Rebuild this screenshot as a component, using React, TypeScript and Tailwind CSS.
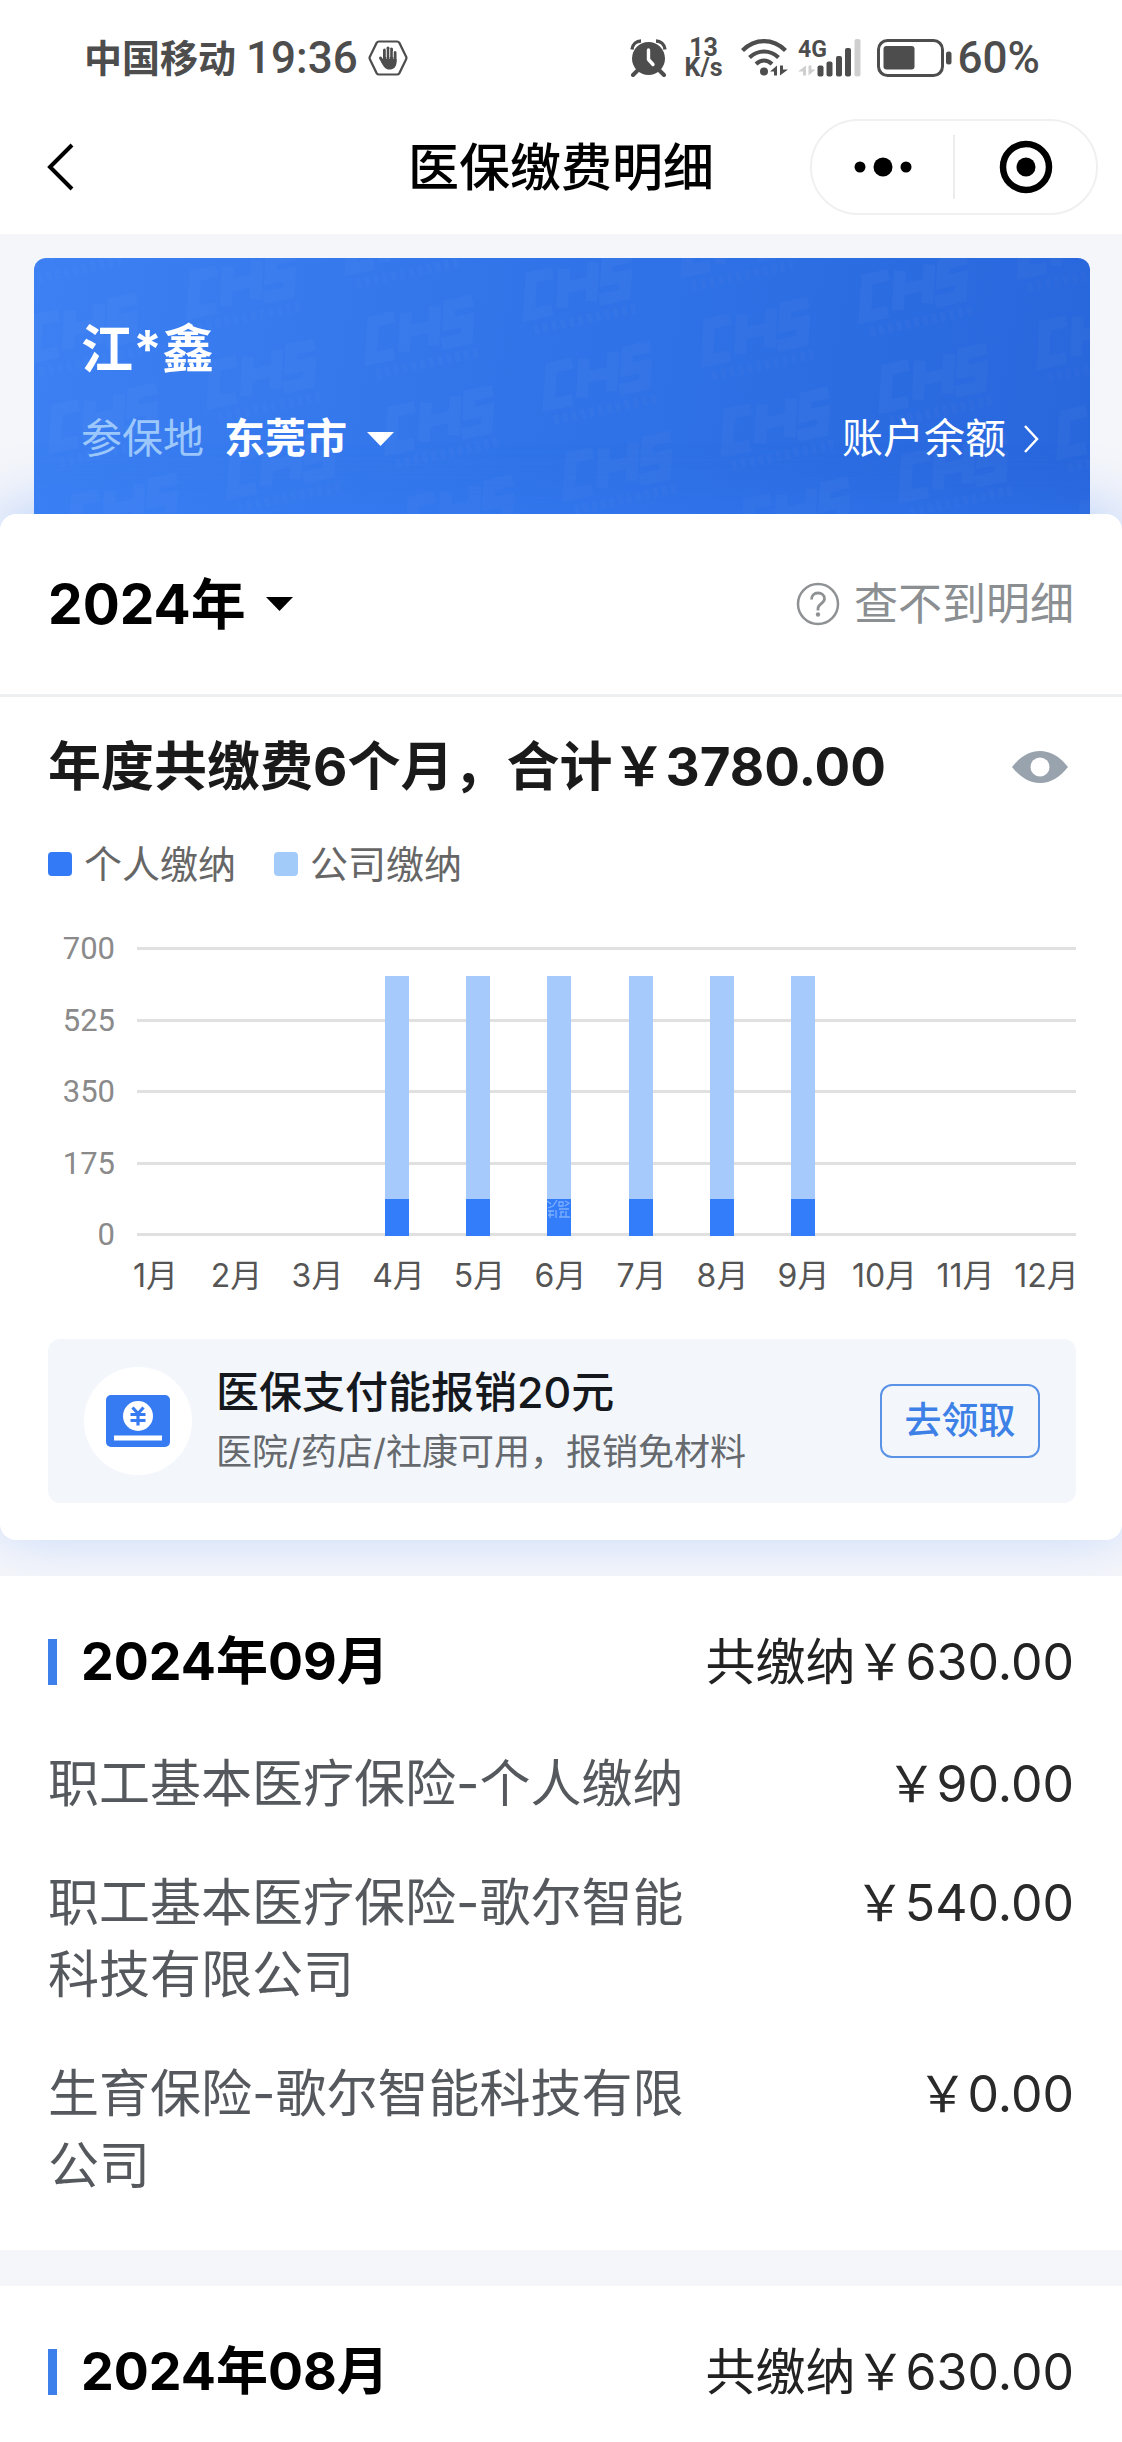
import React from "react";

type Contribution = { label: string; personal: number; company: number; stamped: boolean };
type Item = { name: string; amount: string };
type Statement = { month: string; total: string; items: Item[] };

const AXIS_MAX = 700;
const TICKS = [700, 525, 350, 175, 0];

const CONTRIBUTIONS: Contribution[] = Array.from({ length: 12 }, (_, i) => {
  const paid = i >= 3 && i <= 8;
  return {
    label: `${i + 1}月`,
    personal: paid ? 90 : 0,
    company: paid ? 540 : 0,
    stamped: i === 5,
  };
});

const STATEMENTS: Statement[] = [
  {
    month: "2024年09月",
    total: "￥630.00",
    items: [
      { name: "职工基本医疗保险-个人缴纳", amount: "￥90.00" },
      { name: "职工基本医疗保险-歌尔智能科技有限公司", amount: "￥540.00" },
      { name: "生育保险-歌尔智能科技有限公司", amount: "￥0.00" },
    ],
  },
  { month: "2024年08月", total: "￥630.00", items: [] },
];

function HandIcon() {
  return (
    <svg width="40" height="38" viewBox="0 0 40 38" fill="none" aria-hidden="true">
      <path d="M11 2.500h18a3 3 0 0 1 2.400 1.400L38 17.400a3 3 0 0 1 0 3l-6.600 13.700a3 3 0 0 1-2.400 1.400H11a3 3 0 0 1-2.400-1.400L2 20.400a3 3 0 0 1 0-3L8.600 3.900A3 3 0 0 1 11 2.500Z" stroke="#4d4d4d" strokeWidth="2.200" />
      <g stroke="#4d4d4d" strokeWidth="3" strokeLinecap="round">
        <path d="M16.500 11v10M20 9v12M23.500 10v11M27 13.500v9M12.500 19l3 5" />
      </g>
      <path d="M14 20h14.500v3c0 5-3 7.500-7 7.500s-6-2.500-8.500-8Z" fill="#4d4d4d" />
      <path d="M18.200 10v8M21.800 10v8M25.200 12v6" stroke="#fff" strokeWidth=".7" />
    </svg>
  );
}

function AlarmIcon() {
  return (
    <svg width="37" height="38" viewBox="0 0 37 38" fill="none" aria-hidden="true">
      <circle cx="18.500" cy="19.500" r="16.500" fill="#4d4d4d" />
      <path d="M2 10.500C2.500 5 6.500 2 11 2M35 10.500C34.500 5 30.500 2 26 2" stroke="#4d4d4d" strokeWidth="3.400" />
      <path d="m7 32-4 4M30 32l4 4" stroke="#4d4d4d" strokeWidth="4" strokeLinecap="round" />
      <path d="M18.500 11v9.500l4.500 5" stroke="#fff" strokeWidth="3.400" strokeLinecap="round" strokeLinejoin="round" />
    </svg>
  );
}

function WifiIcon() {
  return (
    <svg width="47" height="38" viewBox="0 0 47 38" fill="none" aria-hidden="true">
      <g stroke="#4d4d4d" strokeWidth="4.200">
        <path d="M1.500 11.500C14-1 32-1 44.500 11.500" />
        <path d="M8.500 18.500c8.500-8 20.500-8 29 0" />
        <path d="M15 25c5-4.500 11-4.500 16 0" />
      </g>
      <circle cx="23" cy="32.500" r="4" fill="#4d4d4d" />
      <path d="M36 26.500v10h-3v-4h-4ZM39 26.500v10l8-6h-5v-4Z" fill="#4d4d4d" />
    </svg>
  );
}

function SignalIcon() {
  return (
    <svg width="63" height="38" viewBox="0 0 63 38" className="overflow-visible" aria-hidden="true">
      <text x="0" y="18" fontSize="23" fontWeight="700" fill="#4d4d4d" fontFamily="Roboto, sans-serif">4G</text>
      <path d="M8 26.500v10H5v-4H0ZM10.500 26.500v10l7-6h-4v-4Z" fill="#cfcfcf" />
      <rect x="19.500" y="26.500" width="6" height="11" rx="2" fill="#4d4d4d" />
      <rect x="28.500" y="22.500" width="6" height="15" rx="2" fill="#4d4d4d" />
      <rect x="38" y="17" width="6" height="20.500" rx="2" fill="#4d4d4d" />
      <rect x="47" y="9" width="6" height="28.500" rx="2" fill="#4d4d4d" />
      <rect x="56.500" y="0" width="6" height="37.500" rx="2" fill="#cfcfcf" />
    </svg>
  );
}

function BatteryIcon() {
  return (
    <svg width="75" height="38" viewBox="0 0 75 38" fill="none" aria-hidden="true">
      <rect x="1.500" y="1.500" width="64" height="35" rx="9" stroke="#4d4d4d" strokeWidth="3" />
      <rect x="6.500" y="7" width="31" height="23.500" rx="3" fill="#4d4d4d" />
      <rect x="69" y="12.500" width="5.500" height="13" rx="2.500" fill="#4d4d4d" />
    </svg>
  );
}

function Caret({ className }: { className: string }) {
  return (
    <svg width="27" height="14" viewBox="0 0 27 14" className={className} aria-hidden="true">
      <path d="M0 0h27L13.500 14Z" fill="currentColor" />
    </svg>
  );
}

function StatusBar() {
  return (
    <div className="flex h-[116px] items-center justify-between pr-[82px] pl-[84px] text-[#4d4d4d]">
      <div className="flex items-center gap-2.5">
        <span className="text-[38px] font-bold">中国移动</span>
        <span className="font-[Roboto] text-[44px] font-medium">19:36</span>
        <HandIcon />
      </div>
      <div className="flex items-center">
        <AlarmIcon />
        <span className="ml-[18px] flex flex-col items-center font-[Roboto] text-[25px] leading-5 font-bold">
          <span>13</span>
          <span>K/s</span>
        </span>
        <span className="ml-[18px]"><WifiIcon /></span>
        <span className="ml-2.5"><SignalIcon /></span>
        <span className="ml-4"><BatteryIcon /></span>
        <span className="ml-1.5 font-[Roboto] text-[44px] font-medium">60%</span>
      </div>
    </div>
  );
}

function NavBar() {
  return (
    <header className="grid h-[118px] grid-cols-[1fr_auto_1fr] items-start px-6">
      <button type="button" aria-label="返回" className="flex h-[102px] w-16 items-center pl-4">
        <svg width="36" height="50" viewBox="0 0 36 50" fill="none" aria-hidden="true">
          <path d="M32 3 10 25l22 22" stroke="#000" strokeWidth="4" />
        </svg>
      </button>
      <h1 className="text-[51px] leading-[104px] font-medium text-black">医保缴费明细</h1>
      <div className="mt-[3px] flex h-24 w-[288px] items-center justify-self-end rounded-full border-2 border-[#f0f0f0]">
        <button type="button" aria-label="更多" className="flex h-full flex-1 items-center justify-center">
          <svg width="58" height="20" viewBox="0 0 58 20" aria-hidden="true">
            <circle cx="6" cy="10" r="5.500" />
            <circle cx="29" cy="10" r="9.500" />
            <circle cx="52" cy="10" r="5.500" />
          </svg>
        </button>
        <span className="h-16 w-0.5 bg-[#ececec]" />
        <button type="button" aria-label="关闭" className="flex h-full flex-1 items-center justify-center">
          <svg width="54" height="54" viewBox="0 0 54 54" aria-hidden="true">
            <circle cx="27" cy="27" r="23" fill="none" stroke="#000" strokeWidth="6.500" />
            <circle cx="27" cy="27" r="9.500" />
          </svg>
        </button>
      </div>
    </header>
  );
}

function CardPattern() {
  const marks: { x: number; y: number }[] = [];
  for (let col = -1; col < 7; col++) {
    for (let row = -4; row < 4; row++) {
      marks.push({ x: -26 + col * 178 + row * 20, y: -4 + col * 46 + row * 90 });
    }
  }
  return (
    <svg className="pointer-events-none absolute inset-0 h-full w-full" aria-hidden="true">
      {marks.map((m) => (
        <g key={`${m.x},${m.y}`} transform={`translate(${m.x} ${m.y}) rotate(-12)`} stroke="#fff" fill="none">
          <path d="M36 -22H14L4 14H28M48 -24 38 14M78 -24 68 14M43 -5H73M116 -22H92L87 -4H107L102 14H76" strokeWidth="12" strokeOpacity=".028" />
          <path d="M6 30H112" strokeWidth="10" strokeDasharray="5 4" strokeOpacity=".02" />
        </g>
      ))}
    </svg>
  );
}

function InsuredCard() {
  return (
    <section className="relative mr-8 ml-[34px] overflow-hidden rounded-t-xl bg-linear-100 from-[#3c80f3] via-[#3073e8] to-[#2866dc] pt-[60px] pr-[50px] pb-[45px] pl-[47px] text-white">
      <CardPattern />
      <h2 className="relative text-[52px] leading-[64px] font-bold">江*鑫</h2>
      <div className="relative mt-[27px] flex h-[60px] items-center justify-between text-[41px]">
        <button type="button" className="flex items-center">
          <span className="text-[#9cc8fb]">参保地</span>
          <span className="ml-5 font-bold">东莞市</span>
          <Caret className="ml-5" />
        </button>
        <a href="#balance" className="flex items-center gap-4">
          账户余额
          <svg width="18" height="30" viewBox="0 0 18 30" fill="none" aria-hidden="true">
            <path d="m3 2 12 13L3 28" stroke="#fff" strokeWidth="2.500" />
          </svg>
        </a>
      </div>
    </section>
  );
}

function Legend() {
  return (
    <ul className="mt-[34px] flex gap-[38px] text-[38px] leading-[54px] text-[#666]">
      <li className="flex items-center gap-3">
        <span className="size-6 rounded-sm bg-[#337bf6]" />
        个人缴纳
      </li>
      <li className="flex items-center gap-3">
        <span className="size-6 rounded-sm bg-[#a3cbfa]" />
        公司缴纳
      </li>
    </ul>
  );
}

function BarStamp() {
  return (
    <svg width="24" height="20" viewBox="0 0 24 20" fill="none" aria-hidden="true">
      <path d="M0 2l4 3M10 1 6 7 1 9M1 12h6M1 16h6M3 11v8M9 11v8M12 3h4v4h-4zM18 2l4 2-4 3M12 10h10M13 13h4M19 12v6M12 18h11M14 14v4" stroke="#9cc3fd" strokeOpacity=".7" strokeWidth="1.300" />
    </svg>
  );
}

function Chart() {
  return (
    <div className="mt-[34px]">
      <div className="flex">
        <div className="flex w-[67px] shrink-0 flex-col justify-between text-right font-[Roboto] text-[31px] text-[#8a8a8a]">
          {TICKS.map((t) => (
            <span key={t} className="leading-[47px]">{t}</span>
          ))}
        </div>
        <div className="relative my-[22px] ml-[22px] h-[289px] flex-1">
          <div className="flex h-full flex-col justify-between">
            {TICKS.map((t) => (
              <span key={t} className="h-[3px] bg-[#e0e0e0]" />
            ))}
          </div>
          <div className="absolute inset-y-0 -right-[11px] -left-6 grid grid-cols-12">
            {CONTRIBUTIONS.map((c) => (
              <div key={c.label} className="mx-auto flex h-full w-6 flex-col justify-end">
                <span className="bg-[#a5cafb]" style={{ height: `${(c.company / AXIS_MAX) * 100}%` }} />
                <span className="bg-[#337dfb]" style={{ height: `${(c.personal / AXIS_MAX) * 100}%` }}>
                  {c.stamped && <BarStamp />}
                </span>
              </div>
            ))}
          </div>
        </div>
      </div>
      <div className="-mr-[11px] ml-[67px] grid grid-cols-12 text-center text-[32px] leading-9 whitespace-nowrap text-[#555]">
        {CONTRIBUTIONS.map((c) => (
          <span key={c.label} className="flex justify-center">{c.label}</span>
        ))}
      </div>
    </div>
  );
}

function Promo() {
  return (
    <aside className="mt-[45px] flex h-[164px] items-center rounded-xl bg-[#f3f7fc] pr-9 pl-9">
      <span className="flex size-[108px] shrink-0 items-center justify-center rounded-full bg-white">
        <svg width="64" height="52" viewBox="0 0 64 52" fill="none" aria-hidden="true">
          <rect width="64" height="52" rx="5" fill="#377bf3" />
          <circle cx="32" cy="21" r="15" fill="#fff" />
          <path d="m26.500 12.500 5.500 6 5.500-6M24.500 19.500h15M24.500 25.500h15M32 18.500v12" stroke="#377bf3" strokeWidth="3.200" />
          <rect x="8" y="40.500" width="48" height="5" fill="#fff" />
        </svg>
      </span>
      <div className="ml-6 flex-1">
        <h3 className="text-[43px] leading-[58px] font-medium text-[#15181c]">医保支付能报销20元</h3>
        <p className="mt-1 text-[36px] leading-[54px] text-[#666a6e]">医院/药店/社康可用，报销免材料</p>
      </div>
      <button type="button" className="h-[74px] w-40 rounded-xl border-2 border-[#5a93e6] text-[37px] font-medium text-[#3d80e6]">
        去领取
      </button>
    </aside>
  );
}

function YearSummary() {
  return (
    <section className="relative rounded-2xl bg-white shadow-[0_-8px_60px_rgba(60,130,255,0.32)]">
      <div className="flex h-[183px] items-center justify-between border-b-[3px] border-[#eeeff1] pr-12 pl-12">
        <button type="button" className="flex items-center text-[55px] font-bold text-black">
          2024年
          <Caret className="ml-5" />
        </button>
        <a href="#help" className="flex items-center gap-3.5 text-[44px] text-[#8b8f92]">
          <svg width="44" height="44" viewBox="0 0 44 44" fill="none" aria-hidden="true">
            <circle cx="22" cy="22" r="20" stroke="#8f9294" strokeWidth="2.500" />
            <path d="M15.500 17.500c0-4 2.800-6.500 6.500-6.500s6.500 2.400 6.500 5.800c0 4.700-6.500 5-6.500 9.700v2" stroke="#8f9294" strokeWidth="2.800" />
            <circle cx="22" cy="32.500" r="2.200" fill="#8f9294" />
          </svg>
          查不到明细
        </a>
      </div>
      <div className="pt-[34px] pr-[46px] pb-[37px] pl-12">
        <div className="flex items-center justify-between pr-2">
          <h2 className="text-[53px] leading-[72px] font-bold text-[#1a1a1a]">年度共缴费6个月，合计￥3780.00</h2>
          <button type="button" aria-label="隐藏金额">
            <svg width="56" height="32" viewBox="0 0 56 32" aria-hidden="true">
              <path d="M0 16C8 6 17 0 28 0s20 6 28 16C48 26 39 32 28 32S8 26 0 16Z" fill="#98a3ae" />
              <circle cx="28" cy="16" r="9.500" fill="#fff" />
            </svg>
          </button>
        </div>
        <Legend />
        <Chart />
        <Promo />
      </div>
    </section>
  );
}

function MonthStatement({ statement }: { statement: Statement }) {
  return (
    <section className="bg-white pt-[50px] pr-12 pb-12 pl-12 leading-[72px]">
      <div className="flex items-center justify-between">
        <h2 className="flex items-center gap-6 text-[52px] font-bold text-black">
          <span className="h-[46px] w-[9px] bg-[#3d80ec]" />
          {statement.month}
        </h2>
        <p className="text-[50px] text-[#222]">共缴纳{statement.total}</p>
      </div>
      {statement.items.length > 0 && (
        <dl className="mt-[50px] flex flex-col gap-[47px]">
          {statement.items.map((item) => (
            <div key={item.name} className="flex justify-between">
              <dt className="w-[64%] text-[51px] break-all text-[#55595d]">{item.name}</dt>
              <dd className="text-[50px] text-[#2a2a2a]">{item.amount}</dd>
            </div>
          ))}
        </dl>
      )}
    </section>
  );
}

export default function App() {
  return (
    <div className="min-h-screen overflow-hidden bg-[#f5f6fa] font-['Inter','Noto_Sans_CJK_SC',sans-serif]">
      <div className="bg-white">
        <StatusBar />
        <NavBar />
      </div>
      <main className="pt-6">
        <InsuredCard />
        <YearSummary />
        <div className="relative mt-9 flex flex-col gap-9">
          {STATEMENTS.map((s) => (
            <MonthStatement key={s.month} statement={s} />
          ))}
        </div>
      </main>
    </div>
  );
}
